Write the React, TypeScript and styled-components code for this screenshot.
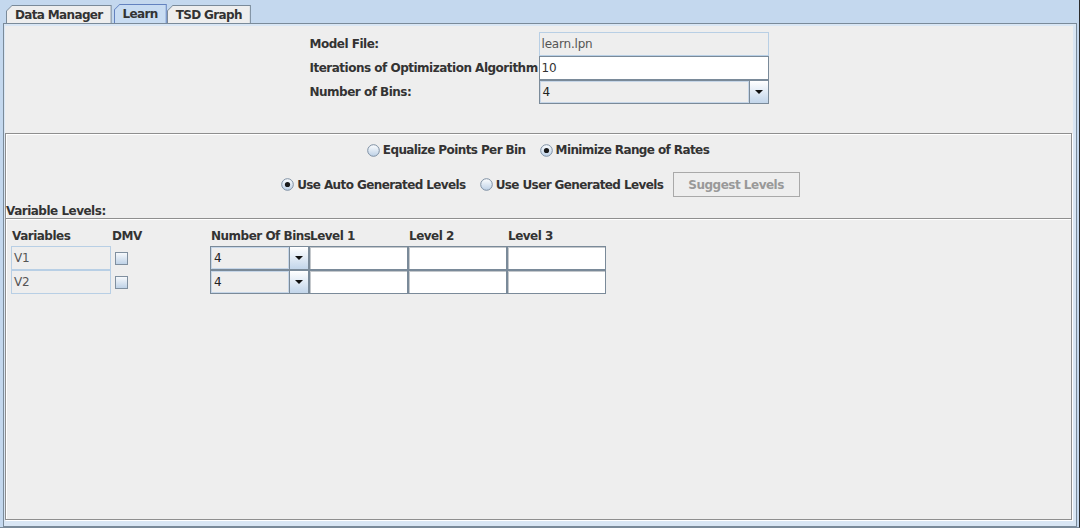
import React, { useId } from "react";
import styled, { createGlobalStyle } from "styled-components";

const GlobalStyle = createGlobalStyle`
  html, body { margin: 0; padding: 0; width: 1080px; height: 528px; overflow: hidden; }
  body {
    font-family: "DejaVu Sans", "Liberation Sans", sans-serif;
    font-size: 12px;
    color: #333333;
  }
`;

const Frame = styled.div`
  width: 1080px;
  height: 528px;
  box-sizing: border-box;
  background: #c4d8ee;
  border-right: 1px solid #2b2b2b;
  border-bottom: 1px solid #7a8a99;
  display: flex;
  flex-direction: column;
`;

const TabStrip = styled.div`
  height: 23px;
  flex: none;
  box-sizing: border-box;
  display: flex;
  align-items: flex-end;
  padding-left: 6px;
`;

const TabShell = styled.div<{ $selected?: boolean }>`
  padding: 1px 1px 0 1px;
  height: ${(p) => (p.$selected ? 19 : 18)}px;
  box-sizing: border-box;
  margin-left: ${(p) => (p.$selected ? 2 : 0)}px;
  background: ${(p) => (p.$selected ? "#6382bf" : "#7a8a99")};
  clip-path: polygon(0 6px, 6px 0, 100% 0, 100% 100%, 0 100%);
  display: flex;
`;

const TabFace = styled.div<{ $selected?: boolean }>`
  background: ${(p) => (p.$selected ? "#c8dcf2" : "#eeeeee")};
  clip-path: polygon(0 5px, 5px 0, 100% 0, 100% 100%, 0 100%);
  padding: 0 8px 0 8px;
  display: flex;
  align-items: center;
  font-weight: bold;
  letter-spacing: -0.65px;
  color: #333333;
`;

const TabBody = styled.div`
  margin-left: 3px;
  width: 1074px;
  flex: 1;
  box-sizing: border-box;
  border: 1px solid #7a8a99;
  padding: 2px 3px 5px 1px;
  background: #d9e6f4;
  display: flex;
`;

const Page = styled.div`
  flex: 1;
  background: #eeeeee;
  display: flex;
  flex-direction: column;
`;

const TopPanel = styled.div`
  height: 107px;
  flex: none;
  box-sizing: border-box;
  padding-top: 6px;
  display: flex;
  justify-content: center;
`;

const Form = styled.div`
  display: grid;
  grid-template-columns: 229px 230px;
  grid-auto-rows: 24px;
  align-items: center;
  height: max-content;
`;

const Label = styled.div`
  font-weight: bold;
  letter-spacing: -0.5px;
  color: #333333;
  white-space: nowrap;
`;

const Field = styled.div<{ $readonly?: boolean; $inset?: boolean }>`
  height: 24px;
  box-sizing: border-box;
  padding: 0 2px;
  display: flex;
  align-items: center;
  letter-spacing: -0.2px;
  background: ${(p) => (p.$readonly ? "#eeeeee" : "#ffffff")};
  border: 1px solid ${(p) => (p.$readonly ? "#b8cfe5" : "#7a8a99")};
  color: ${(p) => (p.$readonly ? "#555555" : "#333333")};
  box-shadow: ${(p) => (p.$inset ? "inset 1px 1px 0 #c4c8cc" : "none")};
`;

const Combo = styled.div`
  height: 24px;
  box-sizing: border-box;
  border: 1px solid #7a8a99;
  background: #eeeeee;
  display: flex;
`;

const ComboValue = styled.div`
  flex: 1;
  display: flex;
  align-items: center;
  padding-left: 3px;
  box-shadow: inset 0 0 0 1px #c6d6e8;
  color: #222222;
`;

const ComboArrow = styled.div`
  width: 18px;
  flex: none;
  border-left: 1px solid #7a8a99;
  background: linear-gradient(#ffffff, #c2d5ea);
  display: flex;
  align-items: center;
  justify-content: center;

  &::after {
    content: "";
    width: 0;
    height: 0;
    border-left: 4px solid transparent;
    border-right: 4px solid transparent;
    border-top: 4px solid #111111;
  }
`;

const LowerPanel = styled.div`
  flex: 1;
  margin: 0 1px 1px 0;
  border: 1px solid #8e8e8e;
  box-shadow: inset 1px 1px 0 #ffffff, 1px 1px 0 #ffffff;
  display: flex;
  flex-direction: column;
`;

const RadioRow = styled.div<{ $top: number; $tall?: boolean }>`
  display: flex;
  justify-content: center;
  align-items: center;
  gap: 5px;
  margin-top: ${(p) => p.$top}px;
  height: ${(p) => (p.$tall ? 25 : 22)}px;
`;

const RadioItem = styled.label`
  display: inline-flex;
  align-items: center;
  gap: 3px;
  padding: 0 5px 0 4px;
  font-weight: bold;
  letter-spacing: -0.6px;
  color: #333333;
  white-space: nowrap;
`;

const DisabledButton = styled.div`
  height: 25px;
  box-sizing: border-box;
  border: 1px solid #a9a9a9;
  background: #eeeeee;
  padding: 0 15px 0 14px;
  display: flex;
  align-items: center;
  font-weight: bold;
  letter-spacing: -0.5px;
  color: #999999;
  white-space: nowrap;
`;

const SectionLabel = styled.div`
  margin-top: 8px;
  height: 13px;
  line-height: 13px;
  font-weight: bold;
  letter-spacing: -0.5px;
  color: #333333;
`;

const TableArea = styled.div`
  flex: 1;
  border-top: 1px solid #8e8e8e;
  box-shadow: inset 0 1px 0 #ffffff;
  padding: 7px 0 0 5px;
`;

const Table = styled.div`
  display: grid;
  grid-template-columns: 100px 99px 99px 99px 99px 99px;
  grid-template-rows: 20px;
  grid-auto-rows: 24px;
  width: max-content;
`;

const HeadCell = styled.div`
  font-weight: bold;
  letter-spacing: -0.5px;
  color: #333333;
  white-space: nowrap;
  padding-left: 1px;
  display: flex;
  align-items: center;
`;

const CheckCell = styled.div`
  display: flex;
  align-items: center;
  padding-left: 4px;
`;

const CheckBox = styled.div`
  width: 13px;
  height: 13px;
  box-sizing: border-box;
  border: 1px solid #7f8f9f;
  background: linear-gradient(#f6f9fc, #bfd2e7);
`;

function Radio({ checked }: { checked?: boolean }) {
  const id = useId().replace(/:/g, "");
  return (
    <svg width="13" height="13" viewBox="0 0 13 13">
      <defs>
        <linearGradient id={id} x1="0" y1="0" x2="0" y2="1">
          <stop offset="0" stopColor="#fdfeff" />
          <stop offset="1" stopColor="#bcd0e6" />
        </linearGradient>
      </defs>
      <circle cx="6.5" cy="6.5" r="5.8" fill={`url(#${id})`} stroke="#7d8fa3" strokeWidth="1" />
      {checked && <circle cx="6.5" cy="6.5" r="2.6" fill="#1a1a1a" />}
    </svg>
  );
}

const rows = ["V1", "V2"];

export default function App() {
  return (
    <>
      <GlobalStyle />
      <Frame>
        <TabStrip>
          <TabShell>
            <TabFace>Data Manager</TabFace>
          </TabShell>
          <TabShell $selected>
            <TabFace $selected>Learn</TabFace>
          </TabShell>
          <TabShell>
            <TabFace>TSD Graph</TabFace>
          </TabShell>
        </TabStrip>
        <TabBody>
          <Page>
            <TopPanel>
              <Form>
                <Label>Model File:</Label>
                <Field $readonly>learn.lpn</Field>
                <Label>Iterations of Optimization Algorithm</Label>
                <Field>10</Field>
                <Label>Number of Bins:</Label>
                <Combo>
                  <ComboValue>4</ComboValue>
                  <ComboArrow />
                </Combo>
              </Form>
            </TopPanel>
            <LowerPanel>
              <RadioRow $top={5}>
                <RadioItem>
                  <Radio />
                  Equalize Points Per Bin
                </RadioItem>
                <RadioItem>
                  <Radio checked />
                  Minimize Range of Rates
                </RadioItem>
              </RadioRow>
              <RadioRow $top={11} $tall>
                <RadioItem>
                  <Radio checked />
                  Use Auto Generated Levels
                </RadioItem>
                <RadioItem>
                  <Radio />
                  Use User Generated Levels
                </RadioItem>
                <DisabledButton>Suggest Levels</DisabledButton>
              </RadioRow>
              <SectionLabel>Variable Levels:</SectionLabel>
              <TableArea>
                <Table>
                  <HeadCell>Variables</HeadCell>
                  <HeadCell>DMV</HeadCell>
                  <HeadCell>Number Of Bins</HeadCell>
                  <HeadCell>Level 1</HeadCell>
                  <HeadCell>Level 2</HeadCell>
                  <HeadCell>Level 3</HeadCell>
                  {rows.map((v) => (
                    <React.Fragment key={v}>
                      <Field $readonly>{v}</Field>
                      <CheckCell>
                        <CheckBox />
                      </CheckCell>
                      <Combo>
                        <ComboValue>4</ComboValue>
                        <ComboArrow />
                      </Combo>
                      <Field $inset />
                      <Field $inset />
                      <Field $inset />
                    </React.Fragment>
                  ))}
                </Table>
              </TableArea>
            </LowerPanel>
          </Page>
        </TabBody>
      </Frame>
    </>
  );
}
